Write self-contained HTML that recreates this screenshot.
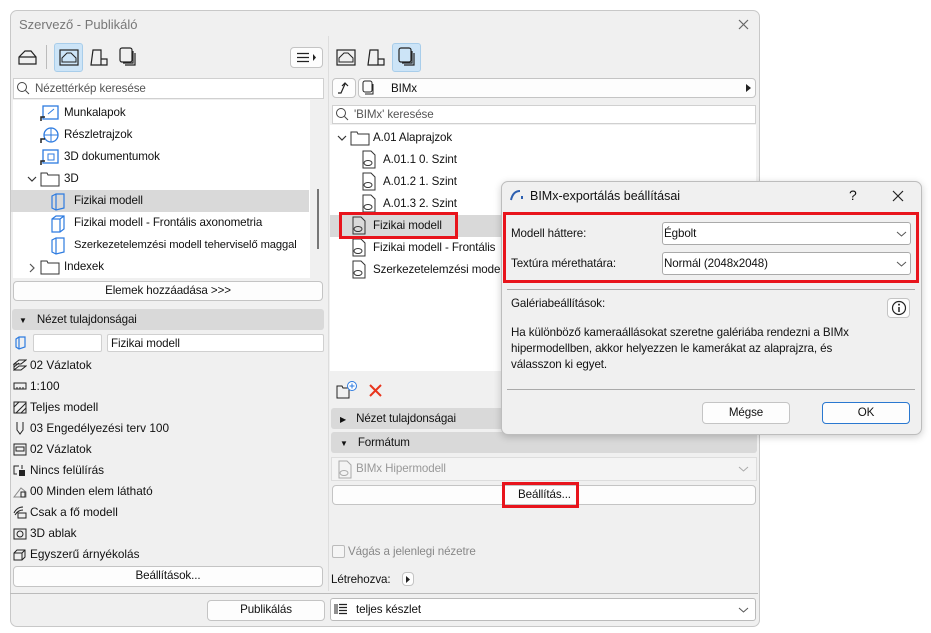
<!DOCTYPE html>
<html><head><meta charset="utf-8"><style>
*{box-sizing:border-box;margin:0;padding:0}
body{width:931px;height:633px;background:#fff;font-family:"Liberation Sans",sans-serif;font-size:12px;color:#111;position:relative;overflow:hidden}
.a{position:absolute}
.win{left:10px;top:10px;width:750px;height:617px;background:#f0f0f0;border:1px solid #c8c8c8;border-radius:7px}
.inp{background:#fff;border:1px solid #d0d0d0;border-radius:3px}
.btn{background:#fdfdfd;border:1px solid #c4c4c4;border-radius:4px;text-align:center;line-height:18px}
.hdr{background:#d9d9d9;border-radius:3px;line-height:21px}
.t{position:absolute;white-space:nowrap;line-height:14px}
.tr{font-size:11.6px;letter-spacing:-0.1px}
.sel{background:#cce4f7;border:1px solid #a8cdea;border-radius:3px}
svg{position:absolute}
.red{border:3px solid #e8141c;position:absolute}
.dlg{left:501px;top:181px;width:421px;height:254px;background:#f0f0f0;border:1px solid #bdbdbd;border-radius:7px;box-shadow:0 2px 8px rgba(0,0,0,.2)}
.li{position:absolute;left:13px;font-size:11.8px;line-height:14px;white-space:nowrap}
.li svg{position:static;vertical-align:-3px;margin-right:3px}
</style></head><body>
<div class="a win"></div>
<div class="t" style="left:19px;top:18px;color:#777;font-size:13px">Szervező - Publikáló</div>
<svg style="left:738px;top:19px" width="11" height="11"><path d="M1 1L10 10M10 1L1 10" stroke="#666" stroke-width="1.2"/></svg>

<svg style="left:18px;top:48px" width="20" height="18" viewBox="0 0 20 18"><path d="M1 16V9L7 3H13L18 9V16Z M1 9H18" fill="none" stroke="#222" stroke-width="1.2"/></svg>
<div class="a" style="left:46px;top:45px;width:1px;height:24px;background:#bbb"></div>
<div class="a sel" style="left:54px;top:43px;width:29px;height:29px"></div>
<svg style="left:59px;top:49px" width="20" height="17" viewBox="0 0 20 17"><rect x="1" y="1" width="18" height="15" fill="none" stroke="#222" stroke-width="1.2"/><path d="M3 13V9L8 4H12L17 9V13Z" fill="none" stroke="#222"/></svg>
<svg style="left:89px;top:48px" width="20" height="19" viewBox="0 0 20 19"><path d="M2 17L4 2H12V11H18V17Z M12 11V17" fill="none" stroke="#222" stroke-width="1.2"/></svg>
<svg style="left:119px;top:47px" width="18" height="20" viewBox="0 0 18 20"><rect x="1" y="1" width="12" height="14" rx="2" fill="none" stroke="#222" stroke-width="1.2"/><path d="M14 4V16H4 M16 6V18H6" fill="none" stroke="#222" stroke-width="1.2"/></svg>
<div class="a btn" style="left:290px;top:47px;width:33px;height:21px"></div>
<svg style="left:296px;top:52px" width="22" height="11"><path d="M1 1.5H13M1 5.5H13M1 9.5H13" stroke="#222" stroke-width="1.2"/><path d="M17 2L20 5.5L17 9Z" fill="#222"/></svg>

<div class="a inp" style="left:13px;top:78px;width:311px;height:21px;border-radius:0"></div>
<svg style="left:16px;top:81px" width="14" height="14"><circle cx="6" cy="6" r="4.5" fill="none" stroke="#444"/><path d="M9.5 9.5L13 13" stroke="#444"/></svg>
<div class="t tr" style="left:35px;top:82px;color:#555">Nézettérkép keresése</div>

<div class="a" style="left:13px;top:100px;width:297px;height:178px;background:#fff"></div>
<div class="a" style="left:11px;top:190px;width:298px;height:22px;background:#d9d9d9"></div>
<div class="a" style="left:317px;top:189px;width:2px;height:60px;background:#777"></div>
<svg style="left:40px;top:104px" width="20" height="18"><rect x="3" y="2" width="15" height="13" fill="none" stroke="#2d7be0" stroke-width="1.3"/><path d="M8 10L14 5" stroke="#2d7be0"/><path d="M1 17V13H5" stroke="#222" stroke-width="1.5" fill="none"/></svg>
<div class="t tr" style="left:64px;top:106px">Munkalapok</div>
<svg style="left:40px;top:126px" width="20" height="18"><circle cx="11" cy="9" r="7" fill="none" stroke="#2d7be0" stroke-width="1.3"/><path d="M11 2V16M4 9H18" stroke="#2d7be0"/><path d="M1 17V13H5" stroke="#222" stroke-width="1.5" fill="none"/></svg>
<div class="t tr" style="left:64px;top:128px">Részletrajzok</div>
<svg style="left:40px;top:148px" width="20" height="18"><rect x="3" y="2" width="15" height="13" fill="none" stroke="#2d7be0" stroke-width="1.3"/><rect x="8" y="6" width="6" height="6" fill="none" stroke="#2d7be0"/><path d="M1 17V13H5" stroke="#222" stroke-width="1.5" fill="none"/></svg>
<div class="t tr" style="left:64px;top:150px">3D dokumentumok</div>
<svg style="left:27px;top:176px" width="10" height="7"><path d="M1 1L5 5L9 1" fill="none" stroke="#333" stroke-width="1.2"/></svg>
<svg style="left:40px;top:171px" width="20" height="16"><path d="M1 2H7L8 4H19V15H1Z" fill="none" stroke="#333"/></svg>
<div class="t tr" style="left:64px;top:172px">3D</div>
<svg style="left:50px;top:193px" width="16" height="18"><path d="M2 3L6 1H14V15L6 17L2 15Z M6 1V17" fill="none" stroke="#2d7be0" stroke-width="1.2"/></svg>
<div class="t tr" style="left:74px;top:194px">Fizikai modell</div>
<svg style="left:50px;top:215px" width="16" height="18"><path d="M2 4L6 1H14V14L10 17H2Z M2 4H10V17 M10 4L14 1" fill="none" stroke="#2d7be0" stroke-width="1.2"/></svg>
<div class="t tr" style="left:74px;top:216px">Fizikai modell - Frontális axonometria</div>
<svg style="left:50px;top:237px" width="16" height="18"><path d="M2 3L6 1H14V15L6 17L2 15Z M6 1V17" fill="none" stroke="#2d7be0" stroke-width="1.2"/></svg>
<div class="t tr" style="left:74px;top:238px;font-size:11.2px">Szerkezetelemzési modell teherviselő maggal</div>
<svg style="left:29px;top:263px" width="7" height="10"><path d="M1 1L5 5L1 9" fill="none" stroke="#555" stroke-width="1.2"/></svg>
<svg style="left:40px;top:259px" width="20" height="16"><path d="M1 2H7L8 4H19V15H1Z" fill="none" stroke="#333"/></svg>
<div class="t tr" style="left:64px;top:260px">Indexek</div>

<div class="a btn tr" style="left:13px;top:281px;width:310px;height:20px">Elemek hozzáadása &gt;&gt;&gt;</div>
<div class="a hdr tr" style="left:12px;top:309px;width:312px;height:21px"><span style="font-size:8px;margin:0 10px 0 7px">▼</span>Nézet tulajdonságai</div>
<svg style="left:14px;top:336px" width="14" height="14"><path d="M2 3L5 1H11V11L5 13L2 11Z M5 1V13" fill="none" stroke="#2d7be0" stroke-width="1.2"/></svg>
<div class="a inp" style="left:33px;top:334px;width:69px;height:18px;border-radius:2px"></div>
<div class="a inp" style="left:107px;top:334px;width:217px;height:18px;border-radius:2px"></div>
<div class="t tr" style="left:111px;top:337px">Fizikai modell</div>

<div class="li" style="top:358px"><svg width="14" height="13"><path d="M1 5L6 1H13L8 5Z M1 8L6 4 M1 11L6 7H13L8 11H1Z M1 5V11" fill="none" stroke="#222"/></svg>02 Vázlatok</div>
<div class="li" style="top:379px"><svg width="14" height="13"><rect x="1" y="3" width="12" height="6" fill="none" stroke="#222"/><path d="M4 7V9M7 7V9M10 7V9" stroke="#222"/></svg>1:100</div>
<div class="li" style="top:400px"><svg width="14" height="13"><rect x="1" y="1" width="12" height="11" fill="none" stroke="#222"/><path d="M1 6L6 1M3 12L13 2M8 12L13 7" stroke="#222"/></svg>Teljes modell</div>
<div class="li" style="top:421px"><svg width="14" height="14"><path d="M4 1V9L7 13L10 9V1" fill="none" stroke="#222"/></svg>03 Engedélyezési terv 100</div>
<div class="li" style="top:442px"><svg width="14" height="13"><rect x="1" y="1" width="12" height="11" fill="none" stroke="#222"/><rect x="3" y="4" width="8" height="4" fill="none" stroke="#222"/></svg>02 Vázlatok</div>
<div class="li" style="top:463px"><svg width="14" height="13"><path d="M6 2H1V10H4" fill="none" stroke="#222"/><rect x="6" y="6" width="6" height="6" fill="#222"/><path d="M9 1V5" stroke="#222"/></svg>Nincs felülírás</div>
<div class="li" style="top:484px"><svg width="14" height="13"><path d="M1 12L8 3L13 7V12Z" fill="none" stroke="#888"/><rect x="8" y="7" width="4" height="5" fill="none" stroke="#222"/></svg>00 Minden elem látható</div>
<div class="li" style="top:505px"><svg width="14" height="13"><path d="M1 7Q4 1 10 1M2 9Q5 4 10 4" fill="none" stroke="#222"/><rect x="5" y="7" width="8" height="5" fill="none" stroke="#222"/></svg>Csak a fő modell</div>
<div class="li" style="top:526px"><svg width="14" height="13"><rect x="1" y="2" width="12" height="10" fill="none" stroke="#222"/><circle cx="7" cy="7" r="3" fill="none" stroke="#222"/></svg>3D ablak</div>
<div class="li" style="top:547px"><svg width="14" height="13"><path d="M1 5L4 2H12V9L9 12H1Z M1 5H9V12M9 5L12 2" fill="none" stroke="#222"/></svg>Egyszerű árnyékolás</div>
<div class="a btn tr" style="left:13px;top:566px;width:310px;height:21px">Beállítások...</div>
<div class="a" style="left:10px;top:593px;width:748px;height:1px;background:#bbb"></div>
<div class="a btn tr" style="left:207px;top:600px;width:118px;height:21px">Publikálás</div>

<div class="a" style="left:328px;top:36px;width:1px;height:555px;background:#ddd"></div>
<svg style="left:336px;top:49px" width="20" height="17" viewBox="0 0 20 17"><rect x="1" y="1" width="18" height="15" fill="none" stroke="#222" stroke-width="1.2"/><path d="M3 13V9L8 4H12L17 9V13Z" fill="none" stroke="#222"/></svg>
<svg style="left:366px;top:48px" width="20" height="19" viewBox="0 0 20 19"><path d="M2 17L4 2H12V11H18V17Z M12 11V17" fill="none" stroke="#222" stroke-width="1.2"/></svg>
<div class="a sel" style="left:392px;top:43px;width:29px;height:29px"></div>
<svg style="left:398px;top:47px" width="18" height="20" viewBox="0 0 18 20"><rect x="1" y="1" width="12" height="14" rx="2" fill="none" stroke="#222" stroke-width="1.2"/><path d="M14 4V16H4 M16 6V18H6" fill="none" stroke="#222" stroke-width="1.2"/></svg>
<div class="a btn" style="left:332px;top:78px;width:24px;height:20px"></div>
<svg style="left:336px;top:81px" width="16" height="14"><path d="M2 12H5L9 3 M6 5L9 2L12 5" fill="none" stroke="#222" stroke-width="1.2"/></svg>
<div class="a btn" style="left:358px;top:78px;width:398px;height:20px"></div>
<svg style="left:362px;top:80px" width="14" height="16"><rect x="1" y="1" width="9" height="11" rx="2" fill="none" stroke="#222"/><path d="M11 4V14H3" fill="none" stroke="#222"/></svg>
<div class="t tr" style="left:391px;top:82px">BIMx</div>
<svg style="left:746px;top:84px" width="5" height="8"><path d="M0 0L5 4L0 8Z" fill="#222"/></svg>
<div class="a inp" style="left:332px;top:105px;width:424px;height:19px;border-radius:0"></div>
<svg style="left:335px;top:107px" width="14" height="14"><circle cx="6" cy="6" r="4.5" fill="none" stroke="#444"/><path d="M9.5 9.5L13 13" stroke="#444"/></svg>
<div class="t tr" style="left:354px;top:108px;color:#555">'BIMx' keresése</div>
<div class="a" style="left:330px;top:125px;width:426px;height:246px;background:#fff"></div>
<div class="a" style="left:330px;top:215px;width:426px;height:22px;background:#d9d9d9"></div>
<svg style="left:337px;top:135px" width="10" height="7"><path d="M1 1L5 5L9 1" fill="none" stroke="#333" stroke-width="1.2"/></svg>
<svg style="left:350px;top:130px" width="20" height="16"><path d="M1 2H7L8 4H19V15H1Z" fill="none" stroke="#333"/></svg>
<div class="t tr" style="left:373px;top:131px">A.01 Alaprajzok</div>
<div class="t tr" style="left:383px;top:153px">A.01.1 0. Szint</div>
<div class="t tr" style="left:383px;top:175px">A.01.2 1. Szint</div>
<div class="t tr" style="left:383px;top:197px">A.01.3 2. Szint</div>
<div class="t tr" style="left:373px;top:219px">Fizikai modell</div>
<div class="t tr" style="left:373px;top:241px">Fizikai modell - Frontális</div>
<div class="t tr" style="left:373px;top:263px">Szerkezetelemzési modell</div>
<svg style="left:350px;top:150px;overflow:visible" width="20" height="130">
<g fill="none" stroke="#333"><g transform="translate(10,0)"><path d="M3 1H11L15 5V18H3Z"/><ellipse cx="8" cy="13" rx="4" ry="2.5"/></g>
<g transform="translate(10,22)"><path d="M3 1H11L15 5V18H3Z"/><ellipse cx="8" cy="13" rx="4" ry="2.5"/></g>
<g transform="translate(10,44)"><path d="M3 1H11L15 5V18H3Z"/><ellipse cx="8" cy="13" rx="4" ry="2.5"/></g>
<g transform="translate(0,66)"><path d="M3 1H11L15 5V18H3Z"/><ellipse cx="8" cy="13" rx="4" ry="2.5"/></g>
<g transform="translate(0,88)"><path d="M3 1H11L15 5V18H3Z"/><ellipse cx="8" cy="13" rx="4" ry="2.5"/></g>
<g transform="translate(0,110)"><path d="M3 1H11L15 5V18H3Z"/><ellipse cx="8" cy="13" rx="4" ry="2.5"/></g></g></svg>
<div class="red" style="left:339px;top:212px;width:119px;height:27px"></div>

<svg style="left:336px;top:380px" width="24" height="20"><path d="M1 6H6L7 8H13V18H1Z" fill="none" stroke="#222"/><circle cx="16" cy="6" r="4.5" fill="#fff" stroke="#2d7be0"/><path d="M16 3.5V8.5M13.5 6H18.5" stroke="#2d7be0"/></svg>
<svg style="left:369px;top:384px" width="13" height="13"><path d="M1 1L12 12M12 1L1 12" stroke="#e8341c" stroke-width="2"/></svg>
<div class="a hdr tr" style="left:331px;top:408px;width:426px;height:21px"><span style="font-size:8px;margin:0 10px 0 9px">▶</span>Nézet tulajdonságai</div>
<div class="a hdr tr" style="left:331px;top:432px;width:426px;height:21px"><span style="font-size:8px;margin:0 10px 0 9px">▼</span>Formátum</div>
<div class="a" style="left:331px;top:457px;width:426px;height:24px;border:1px solid #ddd;background:#f4f4f4"></div>
<svg style="left:336px;top:460px" width="16" height="19"><path d="M3 1H11L15 5V18H3Z" fill="none" stroke="#aaa"/><ellipse cx="8" cy="13" rx="4" ry="2.5" fill="none" stroke="#aaa"/></svg>
<div class="t tr" style="left:356px;top:462px;color:#999">BIMx Hipermodell</div>
<svg style="left:738px;top:466px" width="11" height="6"><path d="M1 1L5.5 5L10 1" fill="none" stroke="#aaa"/></svg>
<div class="a btn" style="left:332px;top:485px;width:424px;height:20px"></div>
<div class="t tr" style="left:518px;top:488px">Beállítás...</div>
<div class="red" style="left:502px;top:482px;width:77px;height:26px"></div>
<div class="a" style="left:332px;top:545px;width:13px;height:13px;border:1px solid #bbb;border-radius:2px;background:#f5f5f5"></div>
<div class="t tr" style="left:348px;top:545px;color:#888">Vágás a jelenlegi nézetre</div>
<div class="t tr" style="left:331px;top:573px">Létrehozva:</div>
<div class="a btn" style="left:402px;top:572px;width:12px;height:14px"></div>
<svg style="left:406px;top:576px" width="4" height="7"><path d="M0 0L4 3.5L0 7Z" fill="#222"/></svg>
<div class="a inp" style="left:330px;top:598px;width:426px;height:23px;border-color:#bbb"></div>
<svg style="left:334px;top:603px" width="14" height="12"><path d="M1 1V11M3 1V11" stroke="#222"/><path d="M5 1.5H13M5 4.5H13M5 7.5H13M5 10.5H13" stroke="#222" stroke-width="1.2"/></svg>
<div class="t tr" style="left:356px;top:603px">teljes készlet</div>
<svg style="left:738px;top:607px" width="11" height="6"><path d="M1 1L5.5 5L10 1" fill="none" stroke="#555"/></svg>

<div class="a dlg"></div>
<svg style="left:510px;top:189px" width="14" height="12"><path d="M1 11Q3 2 10 2" fill="none" stroke="#2d5fb0" stroke-width="2"/><rect x="11" y="7" width="2" height="3" fill="#2d5fb0"/></svg>
<div class="t" style="left:530px;top:189px;font-size:12.5px">BIMx-exportálás beállításai</div>
<div class="t" style="left:849px;top:188px;font-size:14px">?</div>
<svg style="left:892px;top:190px" width="12" height="12"><path d="M1 1L11 11M11 1L1 11" stroke="#222" stroke-width="1.2"/></svg>
<div class="a inp" style="left:662px;top:222px;width:249px;height:23px;border-color:#aaa"></div>
<div class="t tr" style="left:664px;top:227px">Égbolt</div>
<svg style="left:896px;top:231px" width="11" height="6"><path d="M1 1L5.5 5L10 1" fill="none" stroke="#555"/></svg>
<div class="a inp" style="left:662px;top:252px;width:249px;height:23px;border-color:#aaa"></div>
<div class="t tr" style="left:664px;top:257px">Normál (2048x2048)</div>
<svg style="left:896px;top:261px" width="11" height="6"><path d="M1 1L5.5 5L10 1" fill="none" stroke="#555"/></svg>
<div class="t tr" style="left:511px;top:227px">Modell háttere:</div>
<div class="t tr" style="left:511px;top:257px">Textúra mérethatára:</div>
<div class="red" style="left:503px;top:212px;width:416px;height:71px"></div>
<div class="a" style="left:507px;top:289px;width:408px;height:1px;background:#aaa"></div>
<div class="t tr" style="left:511px;top:297px">Galériabeállítások:</div>
<div class="a btn" style="left:887px;top:298px;width:23px;height:20px"></div>
<svg style="left:891px;top:300px" width="16" height="16"><circle cx="8" cy="8" r="6.5" fill="none" stroke="#222" stroke-width="1.2"/><path d="M8 7V12" stroke="#222" stroke-width="1.5"/><circle cx="8" cy="4.6" r="1" fill="#222"/></svg>
<div class="a tr" style="left:511px;top:325px;line-height:16px;width:348px">Ha különböző kameraállásokat szeretne galériába rendezni a BIMx hipermodellben, akkor helyezzen le kamerákat az alaprajzra, és válasszon ki egyet.</div>
<div class="a" style="left:507px;top:389px;width:408px;height:1px;background:#aaa"></div>
<div class="a btn tr" style="left:702px;top:402px;width:88px;height:22px;line-height:20px">Mégse</div>
<div class="a btn tr" style="left:822px;top:402px;width:88px;height:22px;line-height:20px;border-color:#2a78d0">OK</div>
</body></html>
